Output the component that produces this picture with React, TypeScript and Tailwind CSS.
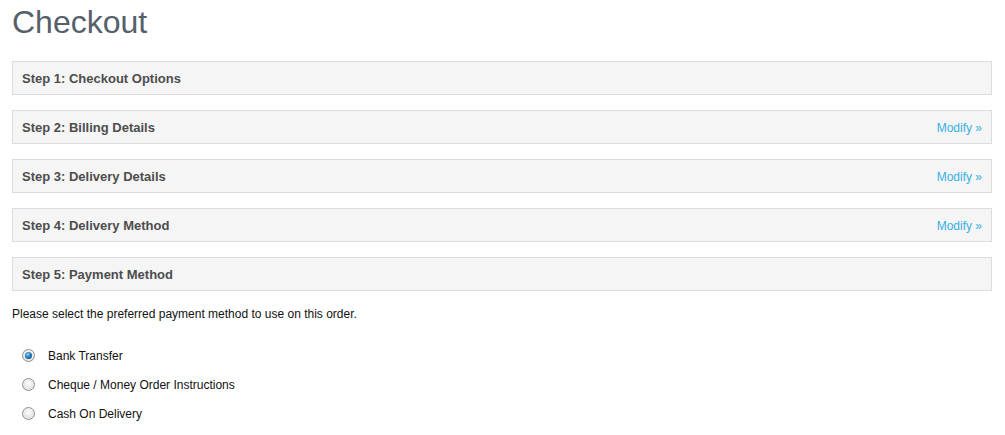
import React from "react";

const steps = [
  { title: "Step 1: Checkout Options", modify: false },
  { title: "Step 2: Billing Details", modify: true },
  { title: "Step 3: Delivery Details", modify: true },
  { title: "Step 4: Delivery Method", modify: true },
  { title: "Step 5: Payment Method", modify: false },
];

const methods = [
  { label: "Bank Transfer", checked: true },
  { label: "Cheque / Money Order Instructions", checked: false },
  { label: "Cash On Delivery", checked: false },
];

function Radio({ checked }: { checked: boolean }) {
  return (
    <span className="relative flex h-[13px] w-[13px] items-center justify-center rounded-full border border-[#8e8f8f] bg-[radial-gradient(circle_at_50%_40%,#fcfcfc_0%,#e6e6e6_60%,#cfcfcf_100%)] shadow-[inset_0_0_1px_#fff]">
      {checked && (
        <span className="h-[7px] w-[7px] rounded-full bg-[radial-gradient(circle_at_40%_35%,#8fd0f5_0%,#2b7bbd_45%,#0e3f6c_100%)]" />
      )}
    </span>
  );
}

export default function App() {
  return (
    <div className="w-[1005px] bg-white px-[12px] pt-[4px] font-['Liberation_Sans',Arial,sans-serif]">
      <h1 className="text-[32px] leading-[36px] font-normal text-[#56606a]">Checkout</h1>
      <div className="mt-[21px] flex w-[980px] flex-col gap-[15px]">
        {steps.map((s) => (
          <div
            key={s.title}
            className="flex h-[34px] items-center justify-between border border-[#dddddd] bg-[#f5f5f5] pt-[2px] pl-[9px] pr-[9px]"
          >
            <span className="text-[13px] font-bold text-[#4d4d4d]">{s.title}</span>
            {s.modify && <span className="text-[12px] text-[#38b0e3]">Modify »</span>}
          </div>
        ))}
      </div>
      <p className="mt-[13px] text-[12px] leading-[20px] text-[#111]">
        Please select the preferred payment method to use on this order.
      </p>
      <div className="mt-[17px] flex flex-col">
        {methods.map((m) => (
          <div key={m.label} className="flex h-[29px] items-center pl-[10px]">
            <Radio checked={m.checked} />
            <span className="ml-[13px] text-[12px] text-[#111]">{m.label}</span>
          </div>
        ))}
      </div>
    </div>
  );
}
